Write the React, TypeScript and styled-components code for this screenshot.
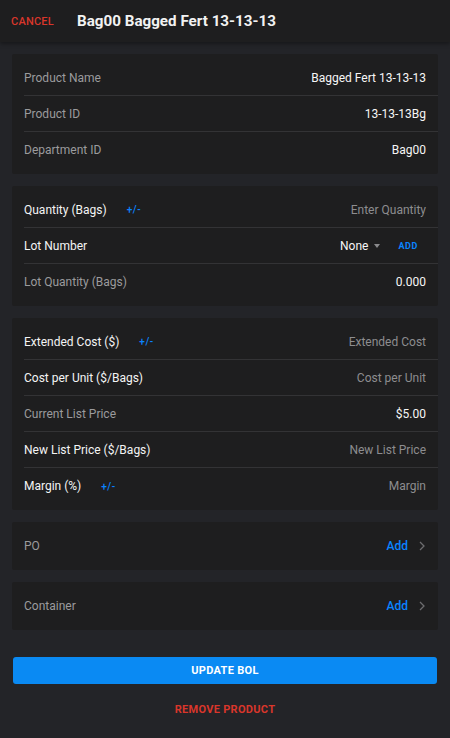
import styled, { createGlobalStyle } from "styled-components";

const GlobalStyle = createGlobalStyle`
  *, *::before, *::after {
    box-sizing: border-box;
  }
  html, body {
    margin: 0;
    padding: 0;
    background: #232428;
  }
  body {
    font-family: Roboto, "Liberation Sans", sans-serif;
    -webkit-font-smoothing: antialiased;
  }
`;

const BLUE = "#0a84ff";
const RED = "#d9362b";

const Page = styled.div`
  min-height: 738px;
  background: #232428;
  display: flex;
  flex-direction: column;
`;

const Header = styled.header`
  height: 42px;
  background: #1e1e1f;
  display: flex;
  align-items: center;
  box-shadow: 0 2px 4px rgba(0, 0, 0, 0.35);
  position: relative;
  z-index: 1;
`;

const CancelButton = styled.button`
  background: none;
  border: none;
  padding: 0 0 0 11px;
  width: 77px;
  text-align: left;
  color: ${RED};
  font-family: inherit;
  font-size: 11px;
  font-weight: 500;
  letter-spacing: 0.2px;
  cursor: pointer;
`;

const Title = styled.h1`
  margin: 0;
  color: #f2f2f2;
  font-size: 15.2px;
  font-weight: 700;
`;

const Content = styled.main`
  display: flex;
  flex-direction: column;
  gap: 12px;
  padding: 12px 12px 0;
`;

const Card = styled.section<{ $plain?: boolean }>`
  background: #1e1e1f;
  border-radius: 2px;
  padding: ${(p) => (p.$plain ? "0 0 0 12px" : "6px 0 6px 12px")};
`;

const Row = styled.div<{ $tall?: boolean }>`
  height: ${(p) => (p.$tall ? 48 : 36)}px;
  display: flex;
  align-items: center;
  padding-right: 12px;
  border-bottom: 1px solid #333335;

  &:last-child {
    border-bottom: none;
  }
`;

const Label = styled.span<{ $muted?: boolean }>`
  color: ${(p) => (p.$muted ? "#9b9b9d" : "#f4f4f4")};
  font-size: 12px;
  font-weight: 400;
`;

const Toggle = styled.span`
  color: ${BLUE};
  font-size: 10px;
  font-weight: 500;
  margin-left: 20px;
  letter-spacing: 0.5px;
`;

const Spacer = styled.div`
  flex: 1;
`;

const Value = styled.span`
  color: #f6f6f6;
  font-size: 12px;
  font-weight: 400;
`;

const Placeholder = styled.span`
  color: #8d8d8f;
  font-size: 12px;
`;

const Select = styled.span`
  display: flex;
  align-items: center;
  gap: 6px;
  color: #f6f6f6;
  font-size: 12px;
  font-weight: 400;
`;

const Caret = styled.span`
  width: 0;
  height: 0;
  border-left: 3.5px solid transparent;
  border-right: 3.5px solid transparent;
  border-top: 4px solid #8a8a8c;
`;

const SmallAdd = styled.span`
  color: ${BLUE};
  font-size: 9px;
  font-weight: 700;
  letter-spacing: 0.6px;
  margin-left: 18px;
  margin-right: 8px;
`;

const LinkAdd = styled.span`
  color: ${BLUE};
  font-size: 12px;
  font-weight: 500;
`;

const Chevron = () => (
  <svg width="8" height="10" viewBox="0 0 8 10" style={{ marginLeft: 10 }}>
    <path d="M2 1l4 4-4 4" fill="none" stroke="#6c6c6e" strokeWidth="1.3" />
  </svg>
);

const Footer = styled.div`
  display: flex;
  flex-direction: column;
  align-items: center;
  padding: 27px 13px 0;
`;

const PrimaryButton = styled.button`
  width: 100%;
  height: 27px;
  border: none;
  border-radius: 3px;
  background: #0a8af3;
  color: #ffffff;
  font-family: inherit;
  font-size: 11px;
  font-weight: 700;
  letter-spacing: 0.3px;
  cursor: pointer;
`;

const DangerButton = styled.button`
  margin-top: 18px;
  background: none;
  border: none;
  color: ${RED};
  font-family: inherit;
  font-size: 11px;
  font-weight: 700;
  letter-spacing: 0.3px;
  cursor: pointer;
`;

export default function App() {
  return (
    <Page>
      <GlobalStyle />
      <Header>
        <CancelButton>CANCEL</CancelButton>
        <Title>Bag00 Bagged Fert 13-13-13</Title>
      </Header>
      <Content>
        <Card>
          <Row>
            <Label $muted>Product Name</Label>
            <Spacer />
            <Value>Bagged Fert 13-13-13</Value>
          </Row>
          <Row>
            <Label $muted>Product ID</Label>
            <Spacer />
            <Value>13-13-13Bg</Value>
          </Row>
          <Row>
            <Label $muted>Department ID</Label>
            <Spacer />
            <Value>Bag00</Value>
          </Row>
        </Card>

        <Card>
          <Row>
            <Label>Quantity (Bags)</Label>
            <Toggle>+/-</Toggle>
            <Spacer />
            <Placeholder>Enter Quantity</Placeholder>
          </Row>
          <Row>
            <Label>Lot Number</Label>
            <Spacer />
            <Select>
              None <Caret />
            </Select>
            <SmallAdd>ADD</SmallAdd>
          </Row>
          <Row>
            <Label $muted>Lot Quantity (Bags)</Label>
            <Spacer />
            <Value>0.000</Value>
          </Row>
        </Card>

        <Card>
          <Row>
            <Label>Extended Cost ($)</Label>
            <Toggle>+/-</Toggle>
            <Spacer />
            <Placeholder>Extended Cost</Placeholder>
          </Row>
          <Row>
            <Label>Cost per Unit ($/Bags)</Label>
            <Spacer />
            <Placeholder>Cost per Unit</Placeholder>
          </Row>
          <Row>
            <Label $muted>Current List Price</Label>
            <Spacer />
            <Value>$5.00</Value>
          </Row>
          <Row>
            <Label>New List Price ($/Bags)</Label>
            <Spacer />
            <Placeholder>New List Price</Placeholder>
          </Row>
          <Row>
            <Label>Margin (%)</Label>
            <Toggle>+/-</Toggle>
            <Spacer />
            <Placeholder>Margin</Placeholder>
          </Row>
        </Card>

        <Card $plain>
          <Row $tall>
            <Label $muted>PO</Label>
            <Spacer />
            <LinkAdd>Add</LinkAdd>
            <Chevron />
          </Row>
        </Card>

        <Card $plain>
          <Row $tall>
            <Label $muted>Container</Label>
            <Spacer />
            <LinkAdd>Add</LinkAdd>
            <Chevron />
          </Row>
        </Card>
      </Content>
      <Footer>
        <PrimaryButton>UPDATE BOL</PrimaryButton>
        <DangerButton>REMOVE PRODUCT</DangerButton>
      </Footer>
    </Page>
  );
}
